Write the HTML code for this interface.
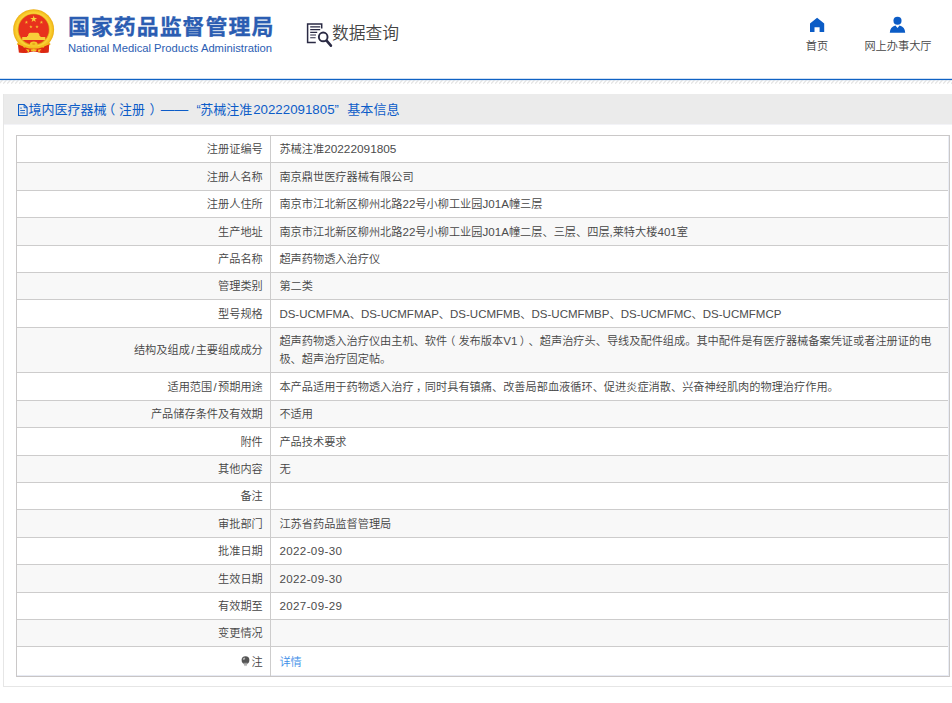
<!DOCTYPE html>
<html lang="zh-CN">
<head>
<meta charset="utf-8">
<title>境内医疗器械（注册）基本信息</title>
<style>
html,body{margin:0;padding:0;}
body{width:952px;height:703px;overflow:hidden;background:#fff;position:relative;
  font-family:"Liberation Sans","Noto Sans CJK SC",sans-serif;color:#444;text-spacing-trim:space-all;}
.abs{position:absolute;white-space:nowrap;}
#logo{left:12px;top:8px;width:44px;height:46px;}
#cn{left:67.9px;top:10.9px;font-size:20.9px;line-height:32px;font-weight:bold;color:#2b5db2;letter-spacing:0.94px;transform-origin:0 0;transform:scaleX(1.05);-webkit-text-stroke:0.3px #2b5db2;}
#en{left:68.3px;top:41.4px;font-size:10.5px;line-height:14px;color:#2b5db2;transform-origin:0 0;transform:scaleX(1.069);}
#qicon{left:305px;top:21px;width:30px;height:28px;}
#qtext{left:332px;top:21px;font-size:16.8px;line-height:25px;color:#444;font-weight:350;}
.nav{font-size:11.2px;line-height:16px;color:#444;text-align:center;font-weight:350;}
#home{left:810px;top:17px;width:15px;height:15px;}
#user{left:889px;top:16px;width:17px;height:17px;}
#rule{left:0;top:78px;width:952px;height:4px;}
#hatch{left:0;top:80px;width:952px;height:6px;}
#panel{left:3px;top:94px;width:960px;height:592px;border:1px solid #e6e6e6;border-top:none;box-sizing:content-box;}
#ptitle{left:0;top:0;width:960px;height:30px;background:#ebebeb;border-bottom:1px solid #f3f3f7;}
#ptext{left:-1px;top:6.2px;width:500px;height:20px;font-size:12.8px;line-height:20px;color:#0c5cc8;}
#ptext span{top:0;}
#picon{left:14px;top:10px;width:11px;height:13px;}
#tbl{left:16px;top:135px;width:932px;border:1px solid #cac8c8;border-bottom:none;font-size:11.2px;line-height:18px;color:#444;font-weight:350;}
#tbl::after{content:"";position:absolute;right:0;top:0;bottom:1px;width:1px;background:#e9ecf4;}
.r{position:relative;box-sizing:border-box;border-bottom:1px solid #cdcccc;width:932px;background:#fff;}
.r.g{background:#f8f8f8;}
.r .k{position:absolute;left:0;top:0;bottom:0;width:254px;border-right:1px solid #cdcccc;box-sizing:border-box;
  display:flex;align-items:center;justify-content:flex-end;padding-right:7.2px;white-space:nowrap;}
.r .v{white-space:normal;position:absolute;left:254px;top:0;bottom:0;right:0;display:flex;align-items:center;padding-left:8.4px;padding-right:8px;}
a{color:#3c8ee8;text-decoration:none;}
.l{font-size:11.58px;color:#4c4c4c;}
.d{letter-spacing:0.37px;}
.sl{margin:0 1.35px;}
.n{font-size:11.82px;}
.pl{position:relative;left:-3px;}
.pr{position:relative;left:2.3px;}
.m{font-size:11.51px;}
</style>
</head>
<body>
<svg id="logo" class="abs" viewBox="12 8 44 46">
  <defs>
    <radialGradient id="gring" cx="50%" cy="50%" r="50%">
      <stop offset="0.735" stop-color="#de9a0c"/>
      <stop offset="0.81" stop-color="#fbd33a"/>
      <stop offset="0.92" stop-color="#f6c321"/>
      <stop offset="1" stop-color="#e9ab14"/>
    </radialGradient>
  </defs>
  <path d="M18.2 42.5 L22.5 41.2 L33.7 43.6 L44.9 41.2 L49.2 42.5 L48.6 52.4 L41.5 53.1 L33.7 51.2 L25.9 53.1 L18.8 52.4 Z" fill="#d8230f"/>
  <circle cx="33.65" cy="29.65" r="20.45" fill="url(#gring)"/>
  <circle cx="33.7" cy="29.4" r="15.1" fill="#e8311d"/>
  <polygon points="33.70,15.40 34.51,17.89 37.12,17.89 35.01,19.42 35.82,21.91 33.70,20.38 31.58,21.91 32.39,19.42 30.28,17.89 32.89,17.89" fill="#f9d23c"/>
  <polygon points="26.40,20.50 26.80,21.74 28.11,21.74 27.05,22.51 27.46,23.76 26.40,22.99 25.34,23.76 25.75,22.51 24.69,21.74 26.00,21.74" fill="#f5c431"/>
  <polygon points="41.40,20.50 41.80,21.74 43.11,21.74 42.05,22.51 42.46,23.76 41.40,22.99 40.34,23.76 40.75,22.51 39.69,21.74 41.00,21.74" fill="#f5c431"/>
  <polygon points="30.90,24.90 31.30,26.14 32.61,26.14 31.55,26.91 31.96,28.16 30.90,27.39 29.84,28.16 30.25,26.91 29.19,26.14 30.50,26.14" fill="#f5c431"/>
  <polygon points="37.00,24.90 37.40,26.14 38.71,26.14 37.65,26.91 38.06,28.16 37.00,27.39 35.94,28.16 36.35,26.91 35.29,26.14 36.60,26.14" fill="#f5c431"/>
  <path d="M28.2 34.4 Q28.9 33 30 32.8 L37.6 32.8 Q38.7 33 39.4 34.4 L39.6 35.9 L40.4 35.9 L40.4 37 L45.3 37 L45.3 40.1 L22.2 40.1 L22.2 37 L27.1 37 L27.1 35.9 L28 35.9 Z" fill="#f8cf3a"/>
  <path d="M17.6 42.6 Q33.7 50.5 49.8 42.6 L50.6 44.6 Q33.7 53 16.8 44.6 Z" fill="#f3bd1f"/>
  <path d="M18 44.2 L23.2 46.6 L24.4 53 L19.2 52.2 Z M49.4 44.2 L44.2 46.6 L43 53 L48.2 52.2 Z" fill="#dc2912"/>
  <path d="M24.6 47.2 Q33.7 50.2 42.8 47.2 L42.4 52.6 Q33.7 50 25 52.6 Z" fill="#e22c14"/>
  <ellipse cx="33.7" cy="44" rx="3.9" ry="2.5" fill="#f6c62a"/>
  <ellipse cx="33.7" cy="44" rx="1.6" ry="0.9" fill="#e8a81a"/>
  <path d="M26 49 L29.5 49.8 L28.6 53 L27.4 51 Z M41.4 49 L37.9 49.8 L38.8 53 L40 51 Z M30.5 49.6 Q33.7 48.4 36.9 49.6 L35.8 51.4 Q33.7 50.6 31.6 51.4 Z" fill="#f4c126"/>
</svg>
<div id="cn" class="abs">国家药品监督管理局</div>
<div id="en" class="abs">National Medical Products Administration</div>
<svg id="qicon" class="abs" viewBox="305 21 30 28" fill="none" stroke="#2a2a44">
  <path d="M321.7 28.6 V24 H307.6 V42.4 H315.8" stroke-width="1.5"/>
  <path d="M310.2 26.9 H320.2 M310.2 29.65 H320.2 M310.2 32.35 H317.2 M310.2 35 H316 M310.2 37.75 H315.6" stroke-width="1.15"/>
  <circle cx="323.2" cy="36.9" r="4.35" stroke-width="1.9"/>
  <path d="M326.8 40.8 L330.9 45.7" stroke-width="2.6" stroke-linecap="round"/>
</svg>
<div id="qtext" class="abs">数据查询</div>
<svg id="home" class="abs" viewBox="810 17 15 15">
  <path d="M817.1 17.8 L824.2 23.6 V31.9 H819.6 V27.2 H814.5 V31.9 H810 V23.6 Z" fill="#0b5cc6"/>
</svg>
<div class="abs nav" style="left:786px;top:38px;width:62px;">首页</div>
<svg id="user" class="abs" viewBox="889 16 17 17">
  <circle cx="897.5" cy="20.8" r="4.05" fill="#0b5cc6"/>
  <path d="M889.8 32.8 Q890 26.6 895.4 25.4 L897.5 28.1 L899.6 25.4 Q905 26.6 905.2 32.8 Z" fill="#0b5cc6"/>
</svg>
<div class="abs nav" style="left:858px;top:38px;width:80px;">网上办事大厅</div>
<svg id="rule" class="abs" width="952" height="4" viewBox="0 0 952 4"><rect x="0" y="0.8" width="952" height="1.3" fill="#0f62c4"/></svg>
<svg id="hatch" class="abs" width="952" height="6" viewBox="0 0 952 6">
  <defs><pattern id="hp" width="4" height="6" patternUnits="userSpaceOnUse" x="3.2">
    <path d="M-0.2 3.9 L3.3 0.1" stroke="#c6c6c6" stroke-width="0.85" fill="none"/>
  </pattern></defs>
  <rect x="0" y="0" width="952" height="6" fill="url(#hp)"/>
</svg>
<div id="panel" class="abs">
  <div id="ptitle" class="abs"></div>
  <svg id="picon" class="abs" viewBox="0 0 11 13" fill="none" stroke="#0c5cc8">
  <path d="M0.55 0.55 H6.2 L9.1 3.5 V11.45 H0.55 Z" stroke-width="1.1"/>
  <path d="M6.1 0.8 V3.7 H9" stroke-width="0.9"/>
  <path d="M2.2 4.1 H3.8 M2.2 6.5 H7 M2.2 8.9 H7" stroke-width="0.9"/>
</svg>
  <div id="ptext" class="abs"><span class="abs" style="left:25.5px;font-size:13px">境内医疗器械</span><span class="abs" style="left:99.2px;font-size:13px">（</span><span class="abs" style="left:116.1px;font-size:12.9px">注册</span><span class="abs" style="left:146.6px;font-size:13px">）</span><span class="abs" style="left:157.8px;font-size:13.7px">——</span><span class="abs" style="left:193.4px;font-size:12.8px">“</span><span class="abs" style="left:197.3px;font-size:13.0px">苏械注准</span><span class="abs" style="left:250.2px;font-size:13.3px">20222091805</span><span class="abs" style="left:331.6px;font-size:12.8px">”</span><span class="abs" style="left:344.3px;font-size:13.05px">基本信息</span></div>
</div>
<div id="tbl" class="abs">
  <div class="r" style="height:27px"><div class="k">注册证编号</div><div class="v"><div>苏械注准<span class="l n">20222091805</span></div></div></div>
  <div class="r g" style="height:28px"><div class="k">注册人名称</div><div class="v"><div>南京鼎世医疗器械有限公司</div></div></div>
  <div class="r" style="height:27px"><div class="k">注册人住所</div><div class="v"><div>南京市江北新区柳州北路<span class="l">22</span>号小柳工业园<span class="l">J01A</span>幢三层</div></div></div>
  <div class="r g" style="height:28px"><div class="k">生产地址</div><div class="v"><div>南京市江北新区柳州北路<span class="l">22</span>号小柳工业园<span class="l">J01A</span>幢二层、三层、四层,莱特大楼<span class="l">401</span>室</div></div></div>
  <div class="r" style="height:27px"><div class="k">产品名称</div><div class="v"><div>超声药物透入治疗仪</div></div></div>
  <div class="r g" style="height:27px"><div class="k">管理类别</div><div class="v"><div>第二类</div></div></div>
  <div class="r" style="height:28px"><div class="k">型号规格</div><div class="v"><div><span class="l m">DS-UCMFMA</span>、<span class="l m">DS-UCMFMAP</span>、<span class="l m">DS-UCMFMB</span>、<span class="l m">DS-UCMFMBP</span>、<span class="l m">DS-UCMFMC</span>、<span class="l m">DS-UCMFMCP</span></div></div></div>
  <div class="r g" style="height:45px"><div class="k">结构及组成<span class="sl">/</span>主要组成成分</div><div class="v"><div>超声药物透入治疗仪由主机、软件<span class="pl">（</span>发布版本<span class="l">V1</span><span class="pr">）</span>、超声治疗头、导线及配件组成。其中配件是有医疗器械备案凭证或者注册证的电<br>极、超声治疗固定帖。</div></div></div>
  <div class="r" style="height:28px"><div class="k">适用范围<span class="sl">/</span>预期用途</div><div class="v"><div>本产品适用于药物透入治疗<span class="pr">，</span>同时具有镇痛、改善局部血液循环、促进炎症消散、兴奋神经肌肉的物理治疗作用。</div></div></div>
  <div class="r g" style="height:27px"><div class="k">产品储存条件及有效期</div><div class="v"><div>不适用</div></div></div>
  <div class="r" style="height:28px"><div class="k">附件</div><div class="v"><div>产品技术要求</div></div></div>
  <div class="r g" style="height:27px"><div class="k">其他内容</div><div class="v"><div>无</div></div></div>
  <div class="r" style="height:27px"><div class="k">备注</div><div class="v"><div></div></div></div>
  <div class="r g" style="height:28px"><div class="k">审批部门</div><div class="v"><div>江苏省药品监督管理局</div></div></div>
  <div class="r" style="height:27px"><div class="k">批准日期</div><div class="v"><div><span class="l d">2022-09-30</span></div></div></div>
  <div class="r g" style="height:28px"><div class="k">生效日期</div><div class="v"><div><span class="l d">2022-09-30</span></div></div></div>
  <div class="r" style="height:27px"><div class="k">有效期至</div><div class="v"><div><span class="l d">2027-09-29</span></div></div></div>
  <div class="r g" style="height:27px"><div class="k">变更情况</div><div class="v"><div></div></div></div>
  <div class="r" style="height:30px;box-shadow:inset 0 -1px 0 #e7eaf3;border-bottom-color:#c8c5c5"><div class="k"><svg width="9" height="11" viewBox="0 0 9 11" style="margin-right:1.6px;position:relative;top:-0.2px"><circle cx="4.5" cy="4.1" r="3.9" fill="#555"/><path d="M2.6 6.8 H6.4 L5.9 9.6 H3.1 Z" fill="#9a9a9a"/><path d="M3 8.4 H6 M3.3 9.6 H5.7" stroke="#c8c8c8" stroke-width="0.6"/><ellipse cx="3" cy="2.7" rx="1.3" ry="1" fill="#b9b9b9" transform="rotate(-35 3 2.7)"/></svg>注</div><div class="v"><div><a>详情</a></div></div></div>
</div>
</body>
</html>
